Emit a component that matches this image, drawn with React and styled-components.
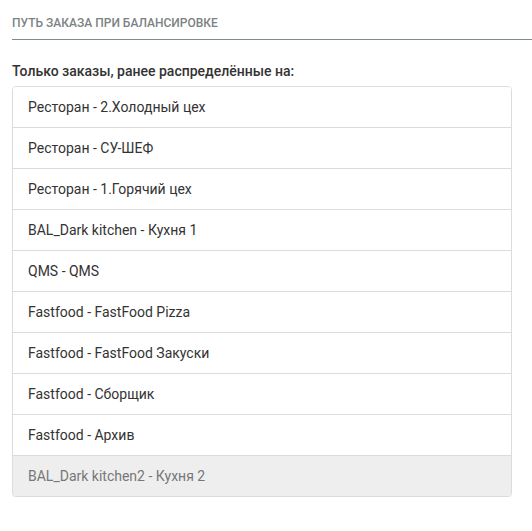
import React from 'react';
import styled, { createGlobalStyle } from 'styled-components';

const GlobalStyle = createGlobalStyle`
  body {
    margin: 0;
    background: #fff;
    font-family: Roboto, 'Liberation Sans', sans-serif;
  }
`;

const Page = styled.div`
  padding: 16px 0 0 12px;
`;

const SectionTitle = styled.div`
  font-size: 12px;
  font-weight: 500;
  color: #7b8383;
  text-transform: uppercase;
  padding-bottom: 9px;
  border-bottom: 1px solid #7f8c8c;
  line-height: 14px;
`;

const Label = styled.div`
  margin: 23px 0 7px;
  font-size: 14px;
  font-weight: 500;
  color: #333;
  line-height: 16px;
`;

const List = styled.ul`
  list-style: none;
  margin: 0;
  padding: 0;
  box-sizing: border-box;
  width: 500px;
  border: 1px solid #dcdcdc;
  border-radius: 4px;
  overflow: hidden;
  box-shadow: 0 1px 1px rgba(0, 0, 0, 0.05);
`;

const Item = styled.li`
  height: 40px;
  display: flex;
  align-items: center;
  padding-left: 15px;
  font-size: 14px;
  color: ${(p) => (p.disabled ? '#777' : '#333')};
  background: ${(p) => (p.disabled ? '#eee' : '#fff')};
  border-top: 1px solid #dcdcdc;

  &:first-child {
    border-top: none;
  }
`;

const items = [
  'Ресторан - 2.Холодный цех',
  'Ресторан - СУ-ШЕФ',
  'Ресторан - 1.Горячий цех',
  'BAL_Dark kitchen - Кухня 1',
  'QMS - QMS',
  'Fastfood - FastFood Pizza',
  'Fastfood - FastFood Закуски',
  'Fastfood - Сборщик',
  'Fastfood - Архив',
];

const App = () => {
  return (
    <Page>
      <GlobalStyle />
      <SectionTitle>Путь заказа при балансировке</SectionTitle>
      <Label>Только заказы, ранее распределённые на:</Label>
      <List>
        {items.map((name) => (
          <Item key={name}>{name}</Item>
        ))}
        <Item disabled>BAL_Dark kitchen2 - Кухня 2</Item>
      </List>
    </Page>
  );
};

export default App;
